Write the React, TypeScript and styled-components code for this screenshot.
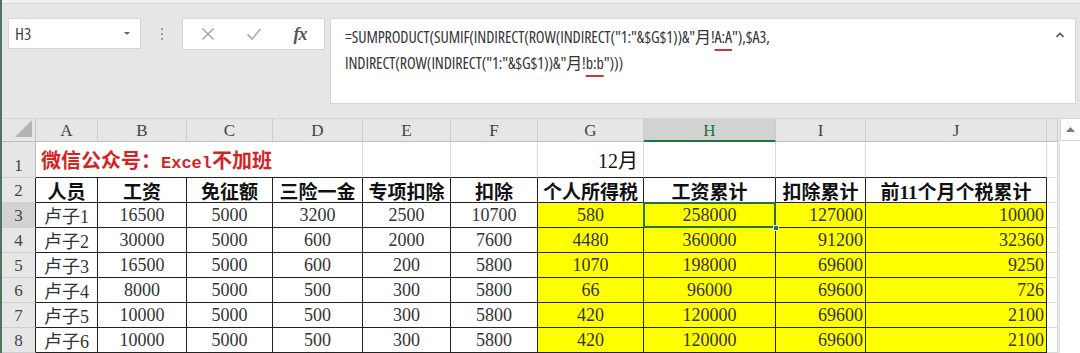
import React from 'react';
import styled, { createGlobalStyle } from 'styled-components';

const GlobalStyle = createGlobalStyle`
  html, body { margin: 0; padding: 0; background: #e6e6e6; }
  body { font-family: "Noto Sans", sans-serif; }
  *, *::before, *::after { box-sizing: border-box; }
`;

const Window = styled.div`
  width: 1080px;
  height: 353px;
  overflow: hidden;
  background: #e6e6e6;
  border-left: 2px solid #4f7562;
  display: flex;
  flex-direction: column;
`;

const TopStrip = styled.div`
  height: 4px;
  flex: none;
  background: #f1f1f1;
  border-bottom: 1px solid #d8d8d8;
`;

const FormulaBar = styled.div`
  height: 114px;
  flex: none;
  display: flex;
  align-items: flex-start;
  padding: 14px 4px 0 6px;
`;

const NameBox = styled.div`
  width: 133px;
  height: 31px;
  background: #fff;
  border: 1px solid #d6d6d6;
  display: flex;
  align-items: center;
  justify-content: space-between;
  padding: 0 10px 0 6px;
  font-family: "Open Sans", sans-serif;
  font-size: 17px;
  font-stretch: 85%;
  color: #444;
`;

const DropTriangle = styled.span`
  width: 0;
  height: 0;
  border-left: 3px solid transparent;
  border-right: 3px solid transparent;
  border-top: 3px solid #666;
`;

const Grip = styled.div`
  width: 41px;
  height: 31px;
  display: flex;
  flex-direction: column;
  align-items: center;
  justify-content: center;
  gap: 3px;
`;

const GripDot = styled.span`
  width: 2px;
  height: 2px;
  background: #9c9c9c;
`;

const ButtonBox = styled.div`
  width: 143px;
  height: 32px;
  background: #fff;
  border: 1px solid #d6d6d6;
  display: flex;
  align-items: center;
  padding-left: 2px;
`;

const IconSlot = styled.span`
  width: 46px;
  display: flex;
  justify-content: center;
  align-items: center;
`;

const Fx = styled.span`
  font-family: "Liberation Serif", serif;
  font-style: italic;
  font-weight: bold;
  font-size: 18px;
  color: #555;
  letter-spacing: -1px;
`;

const FormulaBox = styled.div`
  width: 746px;
  height: 86px;
  margin-left: 5px;
  background: #fff;
  border: 1px solid #d6d6d6;
  display: flex;
  align-items: flex-start;
  padding: 5px 8px 0 14px;
`;

const FormulaText = styled.div`
  flex: 1;
  font-family: "Open Sans", "Noto Sans CJK SC", sans-serif;
  font-stretch: 75%;
  font-size: 16px;
  letter-spacing: -0.1px;
  line-height: 26px;
  color: #333;
  white-space: pre;
`;

const Squiggle = styled.span`
  text-decoration: underline;
  text-decoration-color: #c8383b;
  text-decoration-thickness: 2px;
  text-underline-offset: 6px;
`;

const Collapse = styled.span`
  width: 14px;
  padding-top: 8px;
  display: flex;
  justify-content: center;
`;

const Sheet = styled.div`
  flex: 1;
  display: grid;
  grid-template-columns: 34px 62px 89px 86px 90px 88px 87px 106px 132px 90px 181px 11px 22px;
  grid-template-rows: 24px 36px repeat(7, 25px);
  background: #fff;
`;

const Corner = styled.div`
  background: #e6e6e6;
  border-right: 1px solid #c6c6c6;
  border-bottom: 1px solid #bdbdbd;
  border-top: 1px solid #d6d6d6;
  display: flex;
  align-items: flex-end;
  justify-content: flex-end;
  padding: 0 3px 4px 0;
`;

const ColHeader = styled.div<{ $active?: boolean }>`
  background: ${p => (p.$active ? '#d2d2d2' : '#e6e6e6')};
  border-top: 1px solid #d6d6d6;
  border-right: 1px solid #cdcdcd;
  border-bottom: ${p => (p.$active ? '2px solid #217346' : '1px solid #bdbdbd')};
  color: ${p => (p.$active ? '#217346' : '#444')};
  font-family: "Liberation Serif", serif;
  font-size: 17px;
  display: flex;
  align-items: center;
  justify-content: center;
  padding-top: 2px;
`;

const RowHeader = styled.div<{ $active?: boolean; $dark?: boolean }>`
  background: ${p => (p.$active ? '#d2d2d2' : '#e6e6e6')};
  border-right: 1px solid ${p => (p.$dark ? '#222' : '#bdbdbd')};
  border-bottom: 1px solid #cfcfcf;
  color: #444;
  font-family: "Liberation Serif", serif;
  font-size: 17px;
  display: flex;
  align-items: flex-end;
  justify-content: center;
  padding-bottom: 1px;
`;

type Align = 'left' | 'center' | 'right';

const Cell = styled.div<{
  $align?: Align;
  $fill?: boolean;
  $dark?: boolean;
  $darkBottom?: boolean;
  $bold?: boolean;
  $span?: number;
  $selected?: boolean;
}>`
  position: relative;
  grid-column: span ${p => p.$span ?? 1};
  display: flex;
  align-items: center;
  justify-content: ${p => (p.$align === 'left' ? 'flex-start' : p.$align === 'right' ? 'flex-end' : 'center')};
  padding: 0 2px;
  background: ${p => (p.$fill ? '#ffff00' : '#fff')};
  border-right: 1px solid ${p => (p.$dark ? '#222' : '#dadada')};
  border-bottom: 1px solid ${p => (p.$dark || p.$darkBottom ? '#222' : '#dadada')};
  font-family: "Liberation Serif", "Noto Sans CJK SC", serif;
  font-size: ${p => (p.$bold ? '19px' : '18px')};
  font-weight: ${p => (p.$bold ? 700 : 400)};
  color: ${p => (p.$bold ? '#111' : '#333')};
  white-space: nowrap;
  ${p =>
    p.$selected &&
    `
    &::after {
      content: '';
      position: absolute;
      left: -1px; top: -1px; right: -1px; bottom: -1px;
      border: 2px solid #217346;
      pointer-events: none;
    }
    &::before {
      content: '';
      position: absolute;
      right: -4px; bottom: -4px;
      width: 6px; height: 6px;
      background: #217346;
      border: 1px solid #fff;
      z-index: 2;
    }
  `}
`;

const Title = styled.span`
  font-family: "Liberation Mono", "Noto Sans CJK SC", monospace;
  font-weight: 700;
  font-size: 20px;
  color: #d9221f;
  padding-left: 3px;
`;

const TitleLatin = styled.span`
  font-size: 17px;
`;

const Month = styled.span`
  font-family: "Liberation Serif", "Noto Sans CJK SC", serif;
  font-size: 20px;
  color: #111;
  padding-right: 3px;
`;

const ScrollBar = styled.div`
  grid-column: 13;
  grid-row: 1 / span 9;
  background: #fff;
  border-left: 2px solid #e6e6e6;
  display: flex;
  flex-direction: column;
`;

const ScrollArrow = styled.div`
  height: 23px;
  border: 1px solid #d4d4d4;
  border-right: none;
  display: flex;
  align-items: center;
  justify-content: center;
`;

const columns = ['A', 'B', 'C', 'D', 'E', 'F', 'G', 'H', 'I', 'J', ''];

const headers = ['人员', '工资', '免征额', '三险一金', '专项扣除', '扣除', '个人所得税', '工资累计', '扣除累计', '前11个月个税累计'];

const data = [
  ['卢子1', '16500', '5000', '3200', '2500', '10700', '580', '258000', '127000', '10000'],
  ['卢子2', '30000', '5000', '600', '2000', '7600', '4480', '360000', '91200', '32360'],
  ['卢子3', '16500', '5000', '600', '200', '5800', '1070', '198000', '69600', '9250'],
  ['卢子4', '8000', '5000', '500', '300', '5800', '66', '96000', '69600', '726'],
  ['卢子5', '10000', '5000', '500', '300', '5800', '420', '120000', '69600', '2100'],
  ['卢子6', '10000', '5000', '500', '300', '5800', '420', '120000', '69600', '2100'],
];

const CloseIcon = () => (
  <svg width="14" height="14" viewBox="0 0 14 14">
    <path d="M1.5 1.5 L12.5 12.5 M12.5 1.5 L1.5 12.5" stroke="#a9a9a9" strokeWidth="1.6" fill="none" />
  </svg>
);

const CheckIcon = () => (
  <svg width="16" height="14" viewBox="0 0 16 14">
    <path d="M1.5 7.5 L6 12 L14.5 2" stroke="#b0b0b0" strokeWidth="1.8" fill="none" />
  </svg>
);

const CaretUp = () => (
  <svg width="8" height="6" viewBox="0 0 8 6">
    <path d="M0.5 5 L4 1.5 L7.5 5" stroke="#555" strokeWidth="1.6" fill="none" />
  </svg>
);

const App: React.FC = () => (
  <>
    <GlobalStyle />
    <Window>
      <TopStrip />
      <FormulaBar>
        <NameBox>
          <span>H3</span>
          <DropTriangle />
        </NameBox>
        <Grip>
          <GripDot />
          <GripDot />
          <GripDot />
        </Grip>
        <ButtonBox>
          <IconSlot>
            <CloseIcon />
          </IconSlot>
          <IconSlot>
            <CheckIcon />
          </IconSlot>
          <IconSlot>
            <Fx>fx</Fx>
          </IconSlot>
        </ButtonBox>
        <FormulaBox>
          <FormulaText>
            {'=SUMPRODUCT(SUMIF(INDIRECT(ROW(INDIRECT("1:"&$G$1))&"月!'}
            <Squiggle>A:A</Squiggle>
            {'"),$A3,'}
            {'\n'}
            {'INDIRECT(ROW(INDIRECT("1:"&$G$1))&"月!'}
            <Squiggle>b:b</Squiggle>
            {'")))'}
          </FormulaText>
          <Collapse>
            <CaretUp />
          </Collapse>
        </FormulaBox>
      </FormulaBar>
      <Sheet>
        <Corner>
          <svg width="17" height="17" viewBox="0 0 17 17">
            <polygon points="17,0 17,17 0,17" fill="#b4b4b4" />
          </svg>
        </Corner>
        {columns.map((c, i) => (
          <ColHeader key={`h${i}`} $active={c === 'H'}>
            {c}
          </ColHeader>
        ))}
        <ScrollBar>
          <ScrollArrow>
            <svg width="9" height="5" viewBox="0 0 9 5">
              <polygon points="4.5,0 9,5 0,5" fill="#7a7a7a" />
            </svg>
          </ScrollArrow>
        </ScrollBar>

        <RowHeader>1</RowHeader>
        <Cell $span={4} $align="left" $darkBottom>
          <Title>
            微信公众号：<TitleLatin>Excel</TitleLatin>不加班
          </Title>
        </Cell>
        <Cell $darkBottom />
        <Cell $darkBottom />
        <Cell $darkBottom $align="right">
          <Month>12月</Month>
        </Cell>
        <Cell $darkBottom />
        <Cell $darkBottom />
        <Cell $darkBottom />
        <Cell />

        <RowHeader $dark>2</RowHeader>
        {headers.map((h, i) => (
          <Cell key={`t${i}`} $dark $bold>
            {h}
          </Cell>
        ))}
        <Cell />

        {data.map((row, r) => (
          <React.Fragment key={`r${r}`}>
            <RowHeader $dark $active={r === 0}>
              {r + 3}
            </RowHeader>
            {row.map((v, i) => (
              <Cell
                key={`c${r}-${i}`}
                $dark
                $fill={i >= 6}
                $align={i >= 8 ? 'right' : 'center'}
                $selected={r === 0 && i === 7}
              >
                {v}
              </Cell>
            ))}
            <Cell />
          </React.Fragment>
        ))}
      </Sheet>
    </Window>
  </>
);

export default App;
